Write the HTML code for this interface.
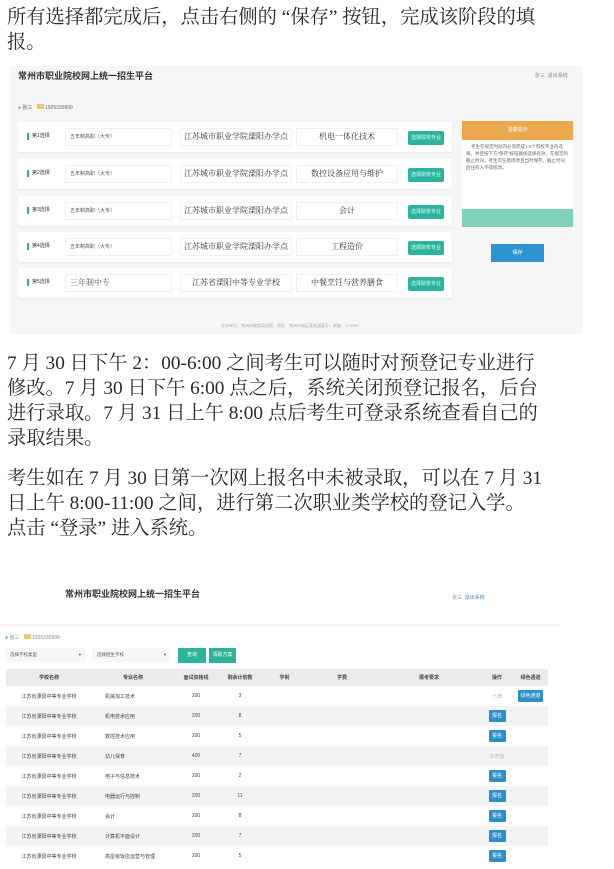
<!DOCTYPE html>
<html><head><meta charset="utf-8"><style>
*{margin:0;padding:0;box-sizing:border-box}
body{width:614px;height:869px;background:#fff;position:relative;overflow:hidden;font-family:"Liberation Serif","Noto Serif CJK SC",serif;color:#222}
.a{position:absolute}
.p{position:absolute;left:7px;font-size:19.3px;line-height:25px;color:#2a2a2a;white-space:nowrap}
.s{font-family:"Liberation Sans","Noto Sans CJK SC",sans-serif}
.row{position:absolute;left:18px;width:434px;height:30px;background:#fff;box-shadow:0 1px 2px rgba(0,0,0,.06)}
.row .lb{position:absolute;left:9px;top:11px;font-size:5px;border-left:2px solid #2bb19a;padding-left:3px;line-height:7px;color:#333}
.row .b1{position:absolute;left:47px;top:6px;width:107px;height:18px;border:1px solid #f0f0f0;font-size:5px;line-height:16px;padding-left:4px;color:#555}
.row .b2{position:absolute;left:162px;top:6px;width:112px;height:18px;border:1px solid #f0f0f0;font-size:8px;line-height:16px;text-align:center;color:#333;white-space:nowrap;font-family:"Liberation Serif","Noto Serif CJK SC",serif}
.row .b3{position:absolute;left:278px;top:6px;width:102px;height:18px;border:1px solid #f0f0f0;font-size:8px;line-height:16px;text-align:center;color:#333;white-space:nowrap;font-family:"Liberation Serif","Noto Serif CJK SC",serif}
.row .bt{position:absolute;left:390px;top:9px;width:36px;height:14px;background:#2bb39b;border-radius:2px;font-size:5px;color:#dff;line-height:14px;text-align:center}
table{border-collapse:collapse;position:absolute;left:6px;top:669px;width:542px;font-size:5px;color:#444}
td,th{height:20px;text-align:center;font-weight:normal;padding:0}
th{height:17px;background:#ebebeb;font-weight:bold}
tr:nth-child(odd) td{background:#f3f3f3}
.bl{display:inline-block;width:17px;height:12px;background:#2b8fcc;color:#fff;line-height:12px;border-radius:1px}
</style></head><body>
<div class="p" style="top:5px">所有选择都完成后，点击右侧的 “保存” 按钮，完成该阶段的填<br>报。</div>

<div class="a s" style="left:10px;top:66px;width:573px;height:268px;background:#f6f6f6"></div>
<div class="a s" style="left:18px;top:69px;font-size:9px;font-weight:bold;color:#333">常州市职业院校网上统一招生平台</div>
<div class="a s" style="left:535px;top:72px;font-size:5px;color:#888">张三 &nbsp;退出系统</div>
<div class="a s" style="left:18px;top:104px;font-size:5px;color:#666"><span style="color:#2bb19a">●</span> 张三 &nbsp;&nbsp;<span style="display:inline-block;width:7px;height:5px;background:#f0c96a"></span> 1925330999</div>
<div class="s">
<div class="row" style="top:122px"><span class="lb">第1选择</span><span class="b1">五年制高职（大专）</span><span class="b2">江苏城市职业学院溧阳办学点</span><span class="b3">机电一体化技术</span><span class="bt">选择院校专业</span></div>
<div class="row" style="top:159px"><span class="lb">第2选择</span><span class="b1">五年制高职（大专）</span><span class="b2">江苏城市职业学院溧阳办学点</span><span class="b3">数控设备应用与维护</span><span class="bt">选择院校专业</span></div>
<div class="row" style="top:196px"><span class="lb">第3选择</span><span class="b1">五年制高职（大专）</span><span class="b2">江苏城市职业学院溧阳办学点</span><span class="b3">会计</span><span class="bt">选择院校专业</span></div>
<div class="row" style="top:232px"><span class="lb">第4选择</span><span class="b1">五年制高职（大专）</span><span class="b2">江苏城市职业学院溧阳办学点</span><span class="b3">工程造价</span><span class="bt">选择院校专业</span></div>
<div class="row" style="top:268px"><span class="lb">第5选择</span><span class="b1" style="font-size:8px;font-family:'Liberation Serif','Noto Serif CJK SC',serif">三年制中专</span><span class="b2">江苏省溧阳中等专业学校</span><span class="b3">中餐烹饪与营养膳食</span><span class="bt">选择院校专业</span></div>
</div>
<div class="a s" style="left:462px;top:121px;width:111px;height:106px;background:#fff"></div>
<div class="a s" style="left:462px;top:121px;width:111px;height:19px;background:#eca84c;font-size:5px;color:#fff;text-align:center;line-height:19px">温馨提示</div>
<div class="a s" style="left:466px;top:143px;width:103px;font-size:4.5px;line-height:7px;color:#666">&nbsp;&nbsp;&nbsp;&nbsp;考生在规定时间内必须完成1-5个院校专业的选择，并且按下方“保存”按钮确保选择有效，在规定的截止时间，考生可任意修改且当时保存，截止时间后任何人不得修改。</div>
<div class="a" style="left:462px;top:209px;width:111px;height:18px;background:#7fd0bd"></div>
<div class="a s" style="left:491px;top:244px;width:53px;height:18px;background:#2c95d1;font-size:5px;color:#fff;text-align:center;line-height:18px">保存</div>
<div class="a s" style="left:221px;top:323px;font-size:4px;color:#aaa">主办单位：常州市教育局试院，地址：常州市城区某街道某号，邮编：213000</div>

<div class="p" style="top:351px">7 月 30 日下午 2：00-6:00 之间考生可以随时对预登记专业进行<br>修改。7 月 30 日下午 6:00 点之后，系统关闭预登记报名，后台<br>进行录取。7 月 31 日上午 8:00 点后考生可登录系统查看自己的<br>录取结果。</div>
<div class="p" style="top:466px">考生如在 7 月 30 日第一次网上报名中未被录取，可以在 7 月 31<br>日上午 8:00-11:00 之间，进行第二次职业类学校的登记入学。<br>点击 “登录” 进入系统。</div>

<div class="a s" style="left:65px;top:587px;font-size:9px;font-weight:bold;color:#333">常州市职业院校网上统一招生平台</div>
<div class="a s" style="left:452px;top:594px;font-size:5px;color:#888">张三 &nbsp;<span style="color:#4a8cc0">退出系统</span></div>
<div class="a" style="left:0;top:624px;width:560px;height:2px;background:#f4f4f4"></div>
<div class="a s" style="left:5px;top:634px;font-size:5px;color:#888"><span style="color:#2bb19a">●</span> 张三 &nbsp;&nbsp;<span style="display:inline-block;width:7px;height:5px;background:#f0c96a"></span> 1925330999</div>
<div class="a s" style="left:5px;top:648px;width:80px;height:14px;background:#f7f7f7;font-size:4.5px;line-height:14px;padding-left:5px;color:#555">选择学校类型 <span style="float:right;padding-right:4px">▾</span></div>
<div class="a s" style="left:92px;top:648px;width:78px;height:14px;background:#f7f7f7;font-size:4.5px;line-height:14px;padding-left:5px;color:#555">选择招生学校 <span style="float:right;padding-right:4px">▾</span></div>
<div class="a s" style="left:178px;top:648px;width:28px;height:15px;background:#2bb39b;font-size:5px;line-height:15px;color:#fff;text-align:center">查询</div>
<div class="a s" style="left:209px;top:648px;width:27px;height:15px;background:#2bb39b;font-size:5px;line-height:15px;color:#fff;text-align:center">清除方案</div>
<table class="s">
<tr><th style="width:86px">学校名称</th><th style="width:82px">专业名称</th><th style="width:44px">面试资格线</th><th style="width:44px">剩余计划数</th><th style="width:45px">学制</th><th style="width:70px">学费</th><th style="width:104px">报考要求</th><th style="width:32px">操作</th><th>绿色通道</th></tr>
<tr><td>江苏省溧阳中等专业学校</td><td style="text-align:left;padding-left:13px">机械加工技术</td><td>200</td><td>3</td><td></td><td></td><td></td><td style="color:#bbb">已满</td><td><span class="bl" style="width:25px">绿色通道</span></td></tr>
<tr><td>江苏省溧阳中等专业学校</td><td style="text-align:left;padding-left:13px">机电技术应用</td><td>200</td><td>8</td><td></td><td></td><td></td><td><span class="bl">报名</span></td><td></td></tr>
<tr><td>江苏省溧阳中等专业学校</td><td style="text-align:left;padding-left:13px">数控技术应用</td><td>200</td><td>5</td><td></td><td></td><td></td><td><span class="bl">报名</span></td><td></td></tr>
<tr><td>江苏省溧阳中等专业学校</td><td style="text-align:left;padding-left:13px">幼儿保育</td><td>400</td><td>7</td><td></td><td></td><td></td><td style="color:#bbb">未开放</td><td></td></tr>
<tr><td>江苏省溧阳中等专业学校</td><td style="text-align:left;padding-left:13px">电子与信息技术</td><td>200</td><td>2</td><td></td><td></td><td></td><td><span class="bl">报名</span></td><td></td></tr>
<tr><td>江苏省溧阳中等专业学校</td><td style="text-align:left;padding-left:13px">电器运行与控制</td><td>200</td><td>11</td><td></td><td></td><td></td><td><span class="bl">报名</span></td><td></td></tr>
<tr><td>江苏省溧阳中等专业学校</td><td style="text-align:left;padding-left:13px">会计</td><td>200</td><td>8</td><td></td><td></td><td></td><td><span class="bl">报名</span></td><td></td></tr>
<tr><td>江苏省溧阳中等专业学校</td><td style="text-align:left;padding-left:13px">计算机平面设计</td><td>200</td><td>7</td><td></td><td></td><td></td><td><span class="bl">报名</span></td><td></td></tr>
<tr><td>江苏省溧阳中等专业学校</td><td style="text-align:left;padding-left:13px">高星级饭店运营与管理</td><td>200</td><td>5</td><td></td><td></td><td></td><td><span class="bl">报名</span></td><td></td></tr>
</table>
</body></html>
